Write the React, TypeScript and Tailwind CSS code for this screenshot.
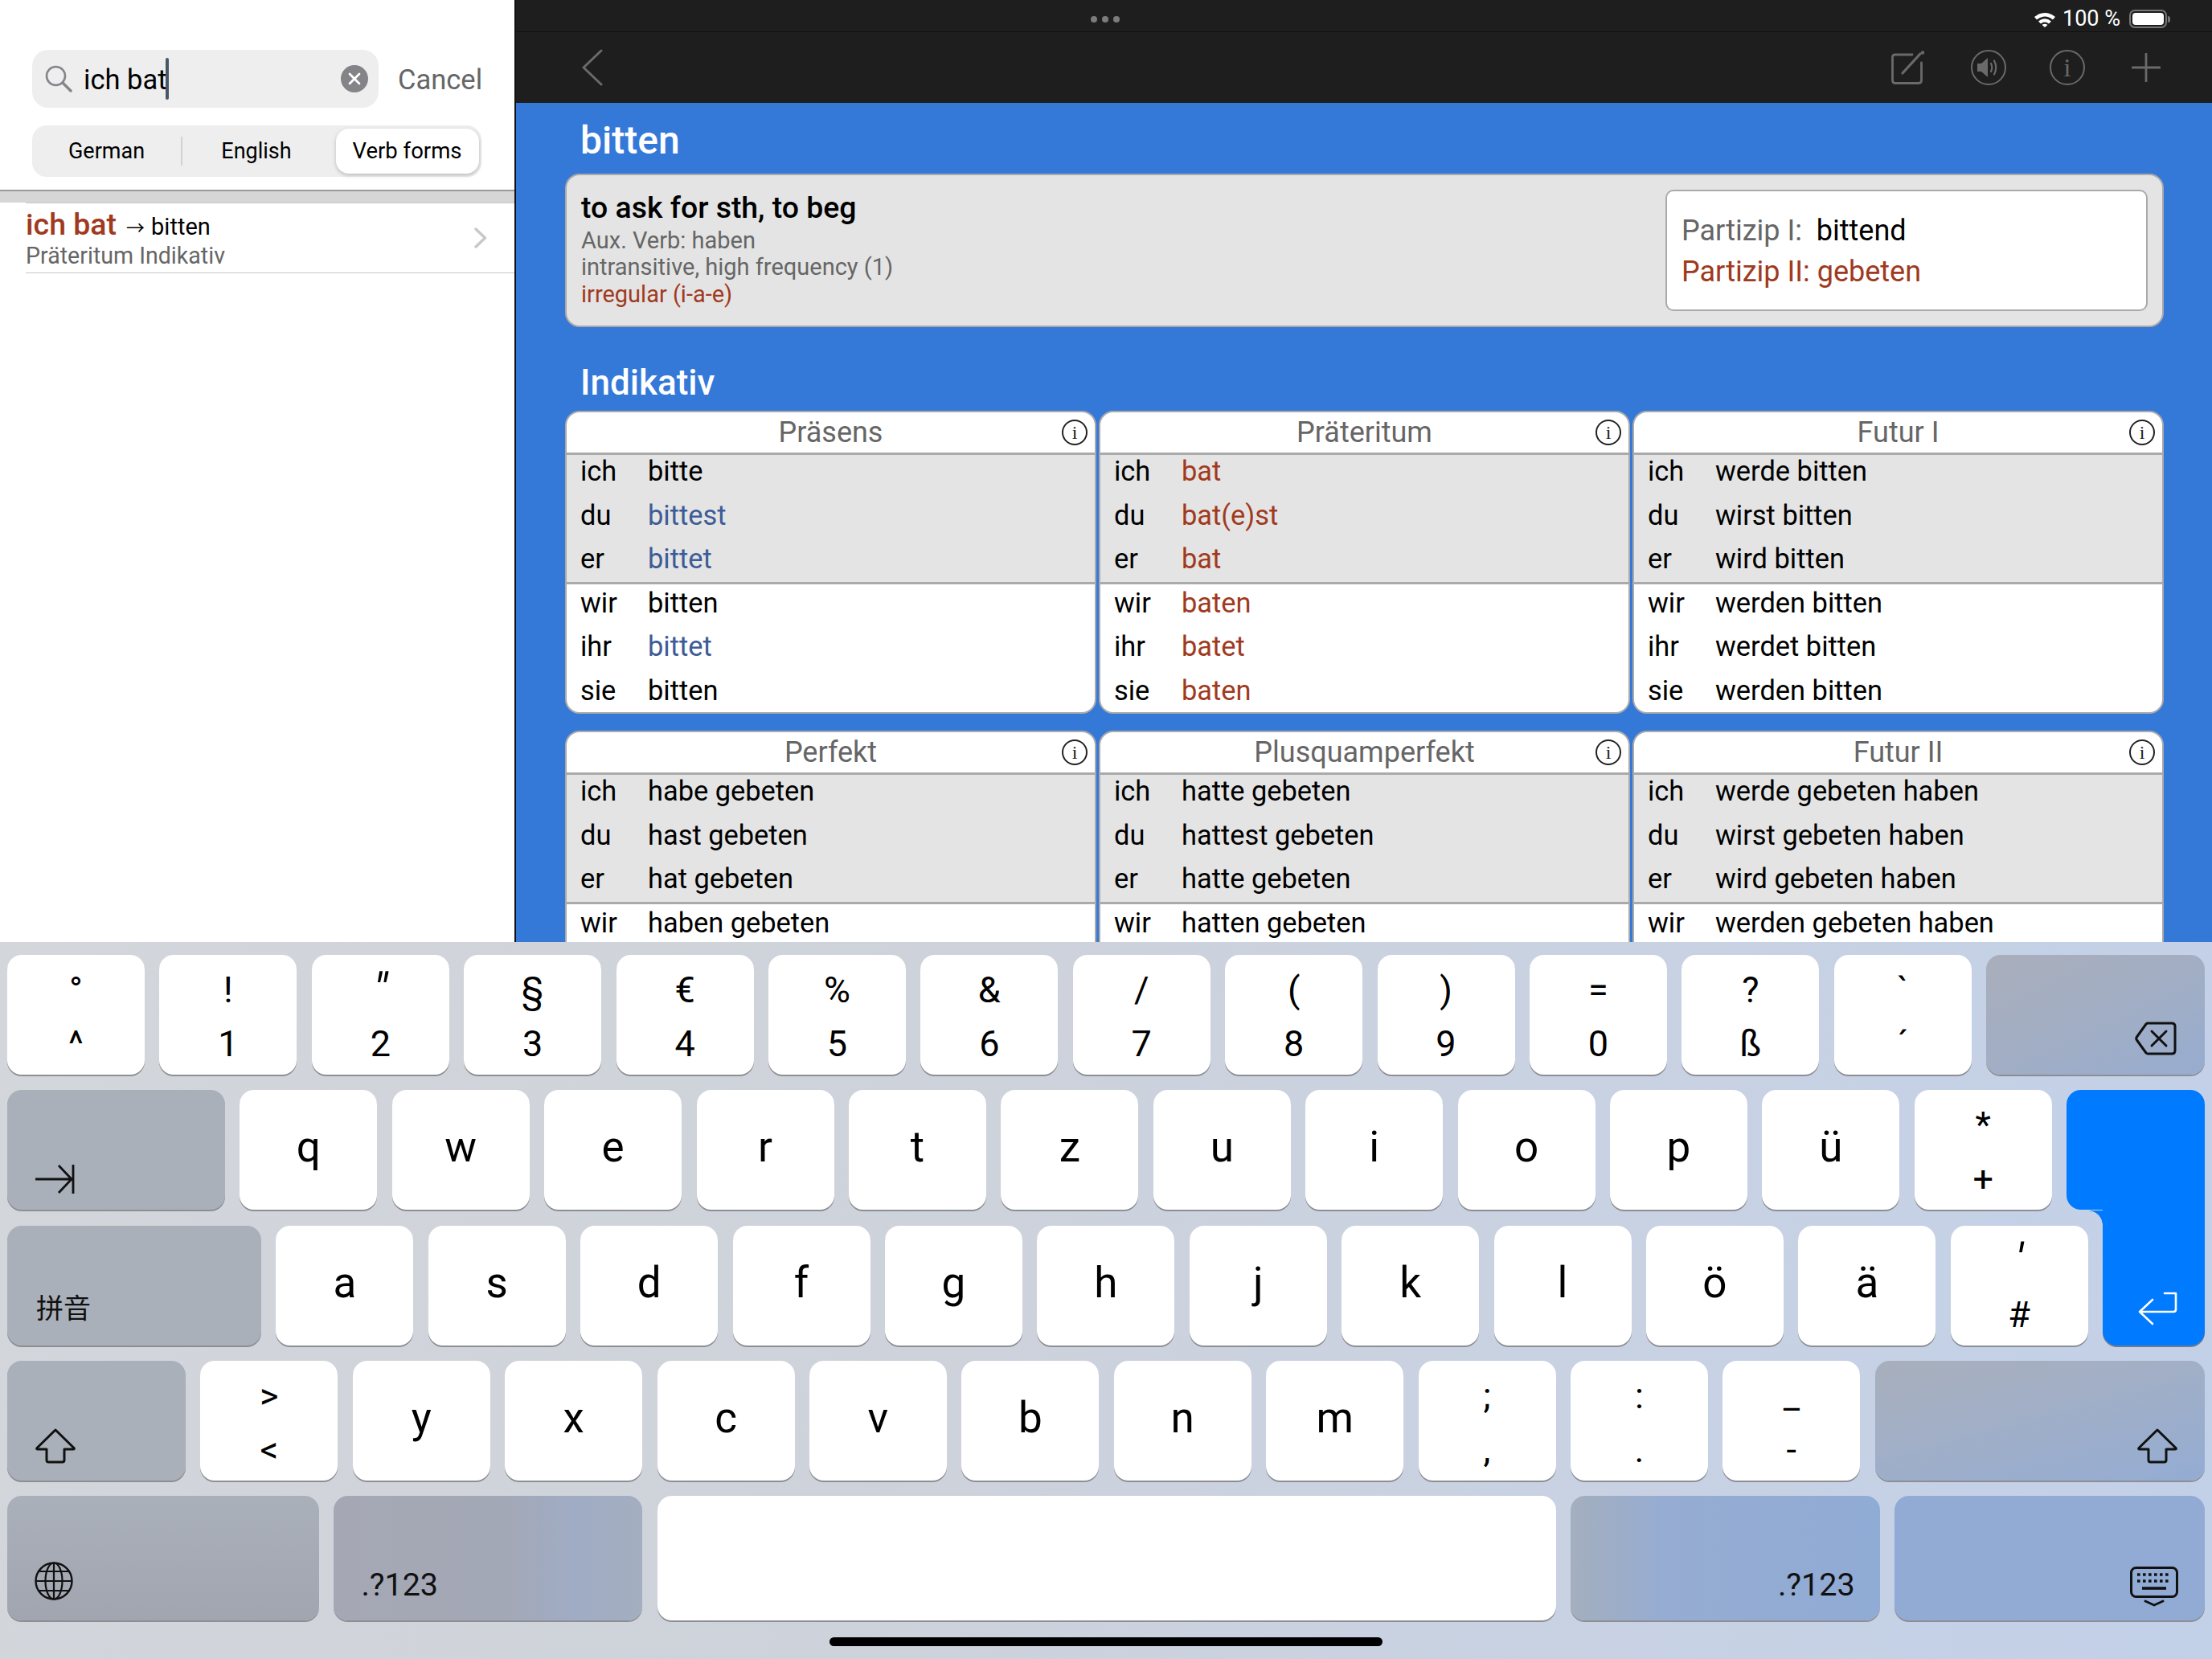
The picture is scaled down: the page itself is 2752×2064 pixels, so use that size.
import React from "react";

type Form = { p: string; f: string; c?: "b" | "r" };
const mk = (forms: string[], colors?: string) =>
  ["ich", "du", "er", "wir", "ihr", "sie"].slice(0, forms.length).map((p, i) => ({ p, f: forms[i], c: (colors ? colors[i] : "k") as any })) as Form[];

const tables: { title: string; rows: Form[] }[] = [
  { title: "Präsens", rows: mk(["bitte", "bittest", "bittet", "bitten", "bittet", "bitten"], "kbbkbk") },
  { title: "Präteritum", rows: mk(["bat", "bat(e)st", "bat", "baten", "batet", "baten"], "rrrrrr") },
  { title: "Futur I", rows: mk(["werde bitten", "wirst bitten", "wird bitten", "werden bitten", "werdet bitten", "werden bitten"]) },
  { title: "Perfekt", rows: mk(["habe gebeten", "hast gebeten", "hat gebeten", "haben gebeten"]) },
  { title: "Plusquamperfekt", rows: mk(["hatte gebeten", "hattest gebeten", "hatte gebeten", "hatten gebeten"]) },
  { title: "Futur II", rows: mk(["werde gebeten haben", "wirst gebeten haben", "wird gebeten haben", "werden gebeten haben"]) },
];

function Row({ r }: { r: Form }) {
  const color = r.c === "b" ? "text-[#3d5c97]" : r.c === "r" ? "text-[#a03a1e]" : "text-black";
  return (
    <div className="flex h-[54.5px] items-center pb-[2px] pl-[17px] text-[34.4px] leading-none text-black">
      <span className="w-[84px]">{r.p}</span>
      <span className={color}>{r.f}</span>
    </div>
  );
}

function InfoDot() {
  return (
    <span className="absolute right-[9px] top-[9px] flex h-[32px] w-[32px] items-center justify-center rounded-full border-2 border-[#222] font-['Liberation_Serif',serif] text-[24px] leading-none text-[#222]">
      i
    </span>
  );
}

function Table({ title, rows }: { title: string; rows: Form[] }) {
  return (
    <div className="h-[377px] overflow-hidden rounded-[18px] border-2 border-[#aaaaaa] bg-white">
      <div className="relative box-content flex h-[50px] items-center justify-center border-b-[3px] border-[#aaaaaa] text-[36px] leading-none text-[#666666]">
        {title}
        <InfoDot />
      </div>
      <div className="flex flex-col border-b-[3px] border-[#aaaaaa] bg-[#e4e4e4]">
        <div className="-mt-[6px]">
          {rows.slice(0, 3).map((r) => (
            <Row key={r.p} r={r} />
          ))}
        </div>
      </div>
      <div className="flex flex-col">
        <div className="-mt-[3px]">
          {rows.slice(3).map((r) => (
            <Row key={r.p} r={r} />
          ))}
        </div>
      </div>
    </div>
  );
}

const keyBase = "relative shrink-0 rounded-[18px] shadow-[0_2px_0_#8c8e93]";
const fnGray = "bg-[#aab0ba]";

function K({ t }: { t: string }) {
  return (
    <div className={`${keyBase} flex h-[149px] w-[171px] items-center justify-center bg-white pb-[6px] text-[53px] leading-none text-black`}>
      {t}
    </div>
  );
}

function K2({ u, l, uc }: { u: string; l: string; uc?: string }) {
  return (
    <div className={`${keyBase} flex h-[149px] w-[171px] flex-col items-center bg-white pt-[10px] text-[45px] leading-[67px] text-black`}>
      <span className={`h-[67px] ${uc ?? ""}`}>{u}</span>
      <span className="h-[67px]">{l}</span>
    </div>
  );
}

function Svg({ w, h, vb, children, className }: { w: number; h: number; vb: string; children: React.ReactNode; className?: string }) {
  return (
    <svg width={w} height={h} viewBox={vb} fill="none" className={className}>
      {children}
    </svg>
  );
}

const ShiftIcon = () => (
  <Svg w={52} h={44} vb="0 0 52 44">
    <path d="M26 2 L49 24.5 Q50 26 48 26 H37 V39.5 Q37 42 34.5 42 H17.5 Q15 42 15 39.5 V26 H4 Q2 26 3 24.5 Z" stroke="#111" strokeWidth="3" strokeLinejoin="round" />
  </Svg>
);

function Fn({ className, children }: { className: string; children?: React.ReactNode }) {
  return <div className={`${keyBase} ${className}`}>{children}</div>;
}

function Keyboard() {
  return (
    <div className="relative flex h-[892px] flex-col gap-[19.25px] bg-[linear-gradient(100deg,#d3d6db_0%,#ced2da_40%,#c9d2e2_68%,#c2d0e8_100%)] px-[9px] pt-[16px]">
      <div className="flex h-[149px] gap-[18.4px]">
        <K2 u="°" l="^" />
        <K2 u="!" l="1" />
        <K2 u="″" l="2" uc="italic text-[58px]" />
        {[["§", "3"], ["€", "4"], ["%", "5"], ["&", "6"], ["/", "7"], ["(", "8"], [")", "9"], ["=", "0"], ["?", "ß"], ["`", "´"]].map(([u, l]) => (
          <K2 key={u} u={u} l={l} />
        ))}
        <Fn className="flex h-[149px] flex-1 items-end justify-end bg-[linear-gradient(155deg,#a9aebb_0%,#a2aec4_50%,#97acd0_100%)] pb-[24px] pr-[35px]">
          <Svg w={52} h={42} vb="0 0 52 42">
            <path d="M16 2 H46 Q50 2 50 6 V36 Q50 40 46 40 H16 Q15 40 14 39 L2.5 23 Q1 21 2.5 19 L14 3 Q15 2 16 2 Z" stroke="#111" strokeWidth="3" strokeLinejoin="round" />
            <path d="M21 12 L39 30 M39 12 L21 30" stroke="#111" strokeWidth="3" strokeLinecap="round" />
          </Svg>
        </Fn>
      </div>

      <div className="flex h-[149px] gap-[18.4px]">
        <Fn className={`flex h-[149px] w-[271px] items-end pb-[19px] pl-[34px] ${fnGray}`}>
          <Svg w={50} h={38} vb="0 0 50 38">
            <path d="M1 19 H46 M30 2 L46 19 L30 36 M48 1 V37" stroke="#111" strokeWidth="2.8" />
          </Svg>
        </Fn>
        {["q", "w", "e", "r", "t", "z", "u", "i", "o", "p", "ü"].map((t) => (
          <K key={t} t={t} />
        ))}
        <K2 u="*" l="+" />
        <div className="h-[149px] flex-1 rounded-t-[18px] rounded-bl-[18px] bg-[#007aff]" />
      </div>

      <div className="flex h-[149px] gap-[18.4px]">
        <Fn className={`flex h-[149px] w-[316px] items-end pb-[31px] pl-[36px] font-['Noto_Sans_CJK_SC',sans-serif] text-[34px] leading-none text-[#111] ${fnGray}`}>拼音</Fn>
        {["a", "s", "d", "f", "g", "h", "j", "k", "l", "ö", "ä"].map((t) => (
          <K key={t} t={t} />
        ))}
        <K2 u="′" l="#" uc="text-[58px] italic" />
        <div className="relative z-10 -mt-[20px] flex h-[169px] flex-1 items-end justify-end rounded-b-[18px] bg-[#007aff] pb-[25px] pr-[34px] shadow-[0_2px_0_#6f7c90]">
          <div className="absolute right-full top-[1px] h-[18px] w-[18px] bg-[radial-gradient(circle_at_0_100%,transparent_17.5px,#007aff_18px)]" />
          <Svg w={50} h={42} vb="0 0 50 42">
            <path d="M48 2 H34 M48 2 V22 Q48 25 45 25 H3 M3 25 L19 10 M3 25 L19 40" stroke="#fff" strokeWidth="2.6" strokeLinecap="round" strokeLinejoin="round" />
          </Svg>
        </div>
      </div>

      <div className="flex h-[149px] gap-[18.4px]">
        <Fn className={`flex h-[149px] w-[222px] items-end pb-[21px] pl-[34px] ${fnGray}`}>
          <ShiftIcon />
        </Fn>
        <K2 u=">" l="<" />
        {["y", "x", "c", "v", "b", "n", "m"].map((t) => (
          <K key={t} t={t} />
        ))}
        <K2 u=";" l="," />
        <K2 u=":" l="." />
        <K2 u="_" l="-" />
        <Fn className="flex h-[149px] flex-1 items-end justify-end bg-[linear-gradient(165deg,#a8afbc_0%,#a2afc6_40%,#94acd3_100%)] pb-[21px] pr-[33px]">
          <ShiftIcon />
        </Fn>
      </div>

      <div className="flex h-[155px] gap-[18.4px]">
        <Fn className="flex h-[155px] w-[388px] items-end bg-[linear-gradient(180deg,#aab0ba_0%,#a1a5b0_100%)] pb-[25px] pl-[34px]">
          <Svg w={48} h={48} vb="0 0 48 48">
            <circle cx="24" cy="24" r="22.5" stroke="#111" strokeWidth="2.4" />
            <ellipse cx="24" cy="24" rx="10.5" ry="22.5" stroke="#111" strokeWidth="2.2" />
            <path d="M24 1.5 V46.5 M1.5 24 H46.5 M5 12 H43 M5 36 H43" stroke="#111" strokeWidth="2.2" />
          </Svg>
        </Fn>
        <Fn className="flex h-[155px] w-[384px] items-end bg-[linear-gradient(90deg,#a5a8b4_0%,#a3a8b6_55%,#a0acc4_78%,#a3aec0_100%)] pb-[25px] pl-[34px] text-[39.5px] leading-none text-[#111]">.?123</Fn>
        <div className={`${keyBase} h-[155px] w-[1118px] bg-white`} />
        <Fn className="flex h-[155px] flex-1 items-end justify-end bg-[linear-gradient(90deg,#a4afbe_0%,#96acd2_30%,#90abd5_100%)] pb-[25px] pr-[31px] text-[39.5px] leading-none text-[#111]">.?123</Fn>
        <Fn className="flex h-[155px] w-[386px] items-end justify-end bg-[#91abd5] pb-[17px] pr-[33px]">
          <Svg w={60} h={50} vb="0 0 60 50">
            <rect x="1.5" y="1.5" width="57" height="36" rx="6" stroke="#111" strokeWidth="3" />
            <path d="M9 10 H51 M9 18 H51" stroke="#111" strokeWidth="3.6" strokeDasharray="3.6 3.4" />
            <path d="M15 27 H45" stroke="#111" strokeWidth="3.6" />
            <path d="M19 43 L30 48 L41 43" stroke="#111" strokeWidth="3" strokeLinecap="round" strokeLinejoin="round" />
          </Svg>
        </Fn>
      </div>
      <div className="absolute bottom-[16px] left-[1032px] h-[11px] w-[688px] rounded-full bg-black" />
    </div>
  );
}

function Sidebar() {
  return (
    <div className="flex w-[640px] shrink-0 flex-col bg-white">
      <div className="flex h-[134px] items-end gap-[24px] pl-[40px]">
        <div className="flex h-[72px] w-[431px] items-center rounded-[20px] bg-[#eeeeef] pl-[16px] pr-[13px]">
          <Svg w={34} h={34} vb="0 0 34 34">
            <circle cx="13.5" cy="13.5" r="11.5" stroke="#85858a" strokeWidth="2.6" />
            <path d="M22 22 L32 32" stroke="#85858a" strokeWidth="3.4" strokeLinecap="round" />
          </Svg>
          <span className="ml-[14px] pt-[2px] text-[34.5px] leading-none text-black">ich bat</span>
          <span className="-ml-[1px] h-[52px] w-[4px] rounded-full bg-[#4b5563]" />
          <span className="ml-auto flex h-[34px] w-[34px] items-center justify-center rounded-full bg-[#838388]">
            <Svg w={16} h={16} vb="0 0 16 16">
              <path d="M2 2 L14 14 M14 2 L2 14" stroke="#fff" strokeWidth="2.8" strokeLinecap="round" />
            </Svg>
          </span>
        </div>
        <span className="mb-[18px] text-[34.5px] leading-none text-[#666666]">Cancel</span>
      </div>
      <div className="ml-[40px] mt-[22px] flex h-[64px] w-[559px] items-center rounded-[18px] bg-[#eeeeee] text-[27px] leading-none text-black">
        <span className="flex w-[185px] justify-center">German</span>
        <span className="h-[36px] w-[1.5px] bg-[#d2d2d2]" />
        <span className="flex w-[191px] justify-center pr-[6px]">English</span>
        <span className="flex h-[56px] w-[178px] items-center justify-center rounded-[16px] bg-white text-[27.5px] shadow-[0_2px_5px_rgba(0,0,0,0.22)]">Verb forms</span>
      </div>
      <div className="mt-[16px] h-[16px] border-t-2 border-[#999999] bg-[#d6d6d6]" />
      <div className="ml-[32px] flex h-[88px] items-center border-y border-[#c8c8c8]">
        <div className="flex-1 pt-[3px]">
          <div className="flex items-baseline leading-none">
            <span className="text-[37.5px] font-medium text-[#a03a1e]">ich bat</span>
            <span className="ml-[12px] text-[23px] text-black">→</span>
            <span className="ml-[8px] text-[29px] text-black">bitten</span>
          </div>
          <div className="mt-[3px] text-[28.6px] leading-[32px] text-[#666666]">Präteritum Indikativ</div>
        </div>
        <Svg w={16} h={26} vb="0 0 16 26" className="mr-[34px]">
          <path d="M2 2 L13.5 13 L2 24" stroke="#c8c8cc" strokeWidth="3.4" strokeLinecap="round" strokeLinejoin="round" />
        </Svg>
      </div>
    </div>
  );
}

function Header() {
  return (
    <div className="relative h-[128px] shrink-0 bg-[#1e1e1e]">
      <div className="flex h-[40px] items-center justify-end border-b border-[#0f0f0f] pr-[52px] pt-[8px] text-white">
        <Svg w={28} h={20} vb="0 0 28 20">
          <path d="M1 7 Q14 -3 27 7 L24 10.5 Q14 2.5 4 10.5 Z M6 12.5 Q14 6 22 12.5 L19 15.5 Q14 11.5 9 15.5 Z M10.5 17 Q14 14.5 17.5 17 L14 20 Z" fill="#fff" />
        </Svg>
        <span className="ml-[8px] text-[27px] leading-none">100 %</span>
        <span className="ml-[11px] flex h-[23px] w-[47px] items-center rounded-[7px] border-2 border-[#777777] p-[2px]">
          <span className="h-full w-full rounded-[4px] bg-white" />
        </span>
        <span className="ml-[1px] h-[8px] w-[3px] rounded-r-full bg-[#777777]" />
      </div>
      <div className="absolute left-[715px] top-[20px] flex gap-[6px]">
        <span className="h-[8px] w-[8px] rounded-full bg-[#7c7c7c]" />
        <span className="h-[8px] w-[8px] rounded-full bg-[#7c7c7c]" />
        <span className="h-[8px] w-[8px] rounded-full bg-[#7c7c7c]" />
      </div>
      <div className="flex h-[88px] items-center pb-[1px] pl-[81px] pr-[64px]">
        <Svg w={28} h={46} vb="0 0 28 46">
          <path d="M25 2 L3 23 L25 44" stroke="#6a6a6a" strokeWidth="3" strokeLinecap="round" strokeLinejoin="round" />
        </Svg>
        <div className="ml-auto flex items-center">
          <Svg w={42} h={42} vb="0 0 42 42">
            <path d="M26 5 H4.5 Q1.5 5 1.5 8 V37 Q1.5 40.5 5 40.5 H34 Q37.5 40.5 37.5 37 V15" stroke="#6a6a6a" strokeWidth="2.8" strokeLinecap="round" />
            <path d="M14 28 L36 4" stroke="#6a6a6a" strokeWidth="3.2" strokeLinecap="round" />
            <circle cx="39" cy="2.5" r="2.2" fill="#6a6a6a" />
          </Svg>
          <span className="ml-[57px] flex h-[44px] w-[44px] items-center justify-center rounded-full border-2 border-[#6a6a6a]">
            <Svg w={30} h={28} vb="0 0 30 28">
              <path d="M1 9 H6 L14 2 V26 L6 19 H1 Z" fill="#6a6a6a" />
              <path d="M18 9 Q20.5 14 18 19 M22 5.5 Q26.5 14 22 22.5" stroke="#6a6a6a" strokeWidth="2.2" strokeLinecap="round" />
            </Svg>
          </span>
          <span className="ml-[54px] flex h-[44px] w-[44px] items-center justify-center rounded-full border-2 border-[#6a6a6a] font-['Liberation_Serif',serif] text-[32px] leading-none text-[#6a6a6a]">
            i
          </span>
          <Svg w={36} h={36} vb="0 0 36 36" className="ml-[58px]">
            <path d="M18 1 V35 M1 18 H35" stroke="#6a6a6a" strokeWidth="2.8" strokeLinecap="round" />
          </Svg>
        </div>
      </div>
    </div>
  );
}

function Main() {
  return (
    <div className="flex min-w-0 flex-1 flex-col overflow-hidden border-l-2 border-[#111111] bg-[#3478d8]">
      <Header />
      <div className="flex flex-col pl-[61px] pr-[60px]">
        <div className="flex h-[88px] items-center pl-[19px] pt-[6px] text-[48px] font-medium leading-none text-white">bitten</div>
        <div className="flex h-[191px] items-center justify-between rounded-[18px] border-2 border-[#aaaaaa] bg-[#e4e4e4] pl-[18px] pr-[18px]">
          <div className="flex flex-col pb-[4px]">
            <div className="mb-[3px] text-[37.4px] font-medium leading-[44px] text-black">to ask for sth, to beg</div>
            <div className="text-[29px] leading-[33.4px] text-[#666666]">Aux. Verb: haben</div>
            <div className="text-[29px] leading-[33.4px] text-[#666666]">intransitive, high frequency (1)</div>
            <div className="text-[29px] leading-[33.4px] text-[#a03a1e]">irregular (i-a-e)</div>
          </div>
          <div className="flex h-[151px] w-[600px] flex-col justify-center rounded-[10px] border-2 border-[#aaaaaa] bg-white pl-[18px] pt-[2px] text-[36px] leading-[51px]">
            <div className="whitespace-pre text-[#666666]">
              Partizip I:  <span className="text-black">bittend</span>
            </div>
            <div className="text-[#a03a1e]">Partizip II: gebeten</div>
          </div>
        </div>
        <div className="flex h-[104px] items-end pb-[13px] pl-[19px] text-[44px] font-medium leading-none text-white">Indikativ</div>
        <div className="grid grid-cols-3 gap-x-[3px] gap-y-[21px]">
          {tables.map((t) => (
            <Table key={t.title} title={t.title} rows={t.rows} />
          ))}
        </div>
      </div>
    </div>
  );
}

export default function App() {
  return (
    <div className="flex h-[2064px] w-[2752px] flex-col overflow-hidden font-['Roboto','Noto_Sans_CJK_SC',sans-serif]">
      <div className="flex h-[1172px] shrink-0 overflow-hidden">
        <Sidebar />
        <Main />
      </div>
      <Keyboard />
    </div>
  );
}
